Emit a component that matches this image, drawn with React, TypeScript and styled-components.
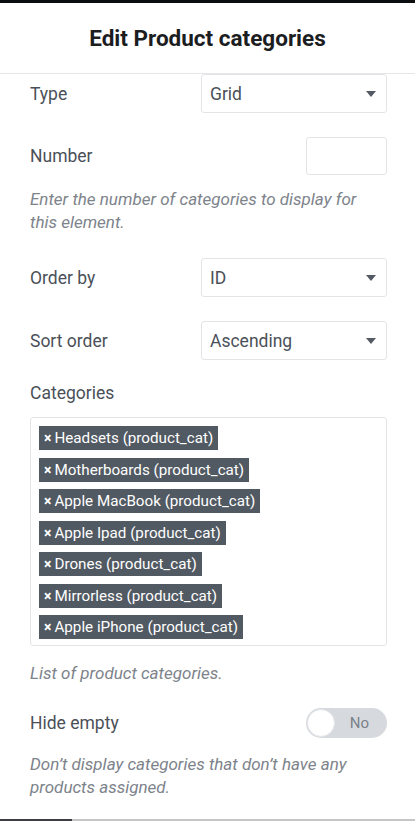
import React from 'react'
import styled, { createGlobalStyle } from 'styled-components'

const GlobalStyle = createGlobalStyle`
  html, body {
    margin: 0;
    padding: 0;
    background: #ffffff;
  }
  body {
    font-family: Roboto, "Liberation Sans", Arial, sans-serif;
  }
  * {
    box-sizing: border-box;
  }
`

const categories = [
  'Headsets',
  'Motherboards',
  'Apple MacBook',
  'Apple Ipad',
  'Drones',
  'Mirrorless',
  'Apple iPhone',
]

const App = () => {
  return (
    <Page>
      <GlobalStyle />
      <TopStrip />
      <Header>
        <Title>Edit Product categories</Title>
      </Header>
      <Content>
        <Row>
          <Label>Type</Label>
          <Select>
            <span>Grid</span>
            <Caret />
          </Select>
        </Row>

        <Row $top={24}>
          <Label>Number</Label>
          <NumberInput />
        </Row>
        <Help $top={13}>Enter the number of categories to display for this element.</Help>

        <Row $top={24}>
          <Label>Order by</Label>
          <Select>
            <span>ID</span>
            <Caret />
          </Select>
        </Row>

        <Row $top={24}>
          <Label>Sort order</Label>
          <Select>
            <span>Ascending</span>
            <Caret />
          </Select>
        </Row>

        <BlockLabel>Categories</BlockLabel>
        <TagBox>
          {categories.map((name) => (
            <Tag key={name}>
              <TagX>×</TagX>
              {name} (product_cat)
            </Tag>
          ))}
        </TagBox>
        <Help $top={16}>List of product categories.</Help>

        <Row $top={23}>
          <Label>Hide empty</Label>
          <Toggle>
            <Knob />
            <ToggleText>No</ToggleText>
          </Toggle>
        </Row>
        <Help $top={15}>Don’t display categories that don’t have any products assigned.</Help>
      </Content>
      <Footer>
        <FooterActive />
      </Footer>
    </Page>
  )
}

export default App

const Page = styled.div`
  width: 415px;
  height: 821px;
  display: flex;
  flex-direction: column;
  overflow: hidden;
  background: #fff;
`

const TopStrip = styled.div`
  height: 3px;
  background: #0c0d0e;
  flex-shrink: 0;
`

const Header = styled.div`
  height: 71px;
  border-bottom: 1px solid #e4e6e8;
  display: flex;
  align-items: center;
  justify-content: center;
  flex-shrink: 0;
`

const Title = styled.h1`
  margin: 0;
  font-size: 22.5px;
  font-weight: 700;
  color: #1c1d1f;
`

const Content = styled.div`
  flex: 1;
  padding: 0 28px 0 30px;
  display: flex;
  flex-direction: column;
`

const Row = styled.div<{ $top?: number }>`
  display: flex;
  align-items: center;
  justify-content: space-between;
  margin-top: ${(p) => p.$top ?? 0}px;
`

const Label = styled.div`
  font-size: 17.5px;
  color: #4b5058;
`

const Select = styled.div`
  width: 186px;
  height: 39px;
  border: 1px solid #e2e4e7;
  border-radius: 3px;
  display: flex;
  align-items: center;
  justify-content: space-between;
  padding: 0 10px 0 8px;
  font-size: 17.5px;
  color: #4b5058;
`

const Caret = styled.span`
  width: 0;
  height: 0;
  border-left: 5.5px solid transparent;
  border-right: 5.5px solid transparent;
  border-top: 6px solid #535a63;
  margin-top: 1px;
`

const NumberInput = styled.div`
  width: 81px;
  height: 38px;
  border: 1px solid #e2e4e7;
  border-radius: 3px;
`

const Help = styled.p<{ $top?: number }>`
  margin: ${(p) => p.$top ?? 0}px 0 0 0;
  font-size: 17px;
  line-height: 23px;
  font-style: italic;
  color: #7d838b;
  padding-right: 10px;
`

const BlockLabel = styled.div`
  margin-top: 23px;
  font-size: 17.5px;
  line-height: 20px;
  color: #4b5058;
`

const TagBox = styled.div`
  margin-top: 14px;
  border: 1px solid #e2e4e7;
  border-radius: 3px;
  padding: 8px 8px 6px 8px;
  display: flex;
  flex-direction: column;
  align-items: flex-start;
  gap: 7.5px;
`

const Tag = styled.div`
  height: 24px;
  background: #515962;
  color: #ffffff;
  font-size: 15.2px;
  display: flex;
  align-items: center;
  padding: 0 5px 0 4px;
  white-space: nowrap;
`

const TagX = styled.span`
  font-size: 14px;
  font-weight: 700;
  margin-right: 3px;
  margin-left: 1px;
`

const Toggle = styled.div`
  position: relative;
  width: 81px;
  height: 30px;
  border-radius: 15px;
  background: #d6d9dd;
  display: flex;
  align-items: center;
  justify-content: flex-end;
  padding-right: 18px;
`

const Knob = styled.span`
  position: absolute;
  left: 1px;
  top: 1px;
  width: 28px;
  height: 28px;
  border-radius: 50%;
  background: #fff;
  border: 1px solid #e4e6e9;
`

const ToggleText = styled.span`
  font-size: 15px;
  color: #7b818a;
`

const Footer = styled.div`
  height: 2px;
  background: #c4c6c8;
  flex-shrink: 0;
  display: flex;
`

const FooterActive = styled.div`
  width: 72px;
  background: #3c3e41;
`
